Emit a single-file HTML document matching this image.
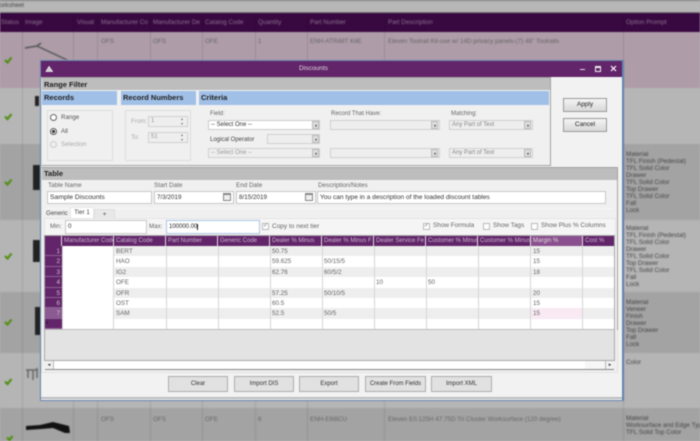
<!DOCTYPE html>
<html><head><meta charset="utf-8"><style>
html,body{margin:0;padding:0;width:700px;height:441px;overflow:hidden;background:#b4b4b4}
*{box-sizing:border-box}
body{font-family:"Liberation Sans",sans-serif;font-size:6.2px;color:#333;position:relative}
div,span{white-space:nowrap}
#bg{position:absolute;left:0;top:0;width:700px;height:441px;filter:blur(.7px);overflow:hidden}
#bg div{position:absolute}
#bg .t{color:#666;font-size:6.3px;line-height:7px}
#bg .h{color:#8d7190;font-size:6.3px;top:19px;line-height:7px}
#bg .o{color:#444;font-size:6.3px;line-height:7px;left:626px}
#fg{position:absolute;left:0;top:0;width:700px;height:441px;filter:blur(.4px)}
#fg div{position:absolute}
.sec{background:#bdbdbd;font-weight:bold;color:#222;font-size:7.5px;padding-left:2px;line-height:13px}
.blue{background:#a0c0e8;font-weight:bold;color:#222;font-size:7.5px;line-height:14px;padding-left:2px}
.inp{background:#fff;border:1px solid #c8c8c8;padding-left:2px;line-height:10px;color:#333;font-size:6.3px}
.dis{background:#eee;border:1px solid #d0d0d0;color:#999;padding-left:2px;line-height:8px;font-size:6px}
.arr{width:7px;height:8px;background:#ddd;border:1px solid #bbb}
.arr:after{content:"";position:absolute;left:1.5px;top:2.5px;border:1.5px solid transparent;border-top:2px solid #333}
.lb{color:#666;line-height:8px;font-size:6.2px}
.btn{background:#e1e1e1;border:1px solid #adadad;text-align:center;color:#333;line-height:15px;font-size:6px}
.btn2{background:linear-gradient(#f4f4f4,#d8d8d8);border:1px solid #999;text-align:center;color:#222;font-size:6.5px}
.gh{background:#62256a;color:#c8b4cc;top:236px;height:10px;line-height:10px;padding-left:2px;border-right:1px solid #ddd;overflow:hidden;font-size:6px}
.r{left:45px;width:569px;height:10.4px}
.rh{left:45px;width:17px;height:10.4px;background:#62256a;color:#cdbdd0;text-align:right;padding-right:2px;line-height:11px;border-bottom:1px solid #8d6094;font-size:6.3px}
.c{color:#666;line-height:11px;font-size:6.3px}
.vl{width:1px;top:246px;height:83px;background:#d6d6d6}
.chk{width:7px;height:7px;background:#fff;border:1px solid #bbb}
</style></head><body>
<div id="bg">
<div style="left:0;top:0;width:700px;height:1px;background:#777"></div>
<div style="left:0;top:1px;width:700px;height:11px;background:#b7b7b7"></div>
<div class="t" style="left:-6px;top:2px;color:#444">Worksheet</div>
<div style="left:0;top:12px;width:700px;height:1px;background:#7a7a7a"></div>
<div style="left:0;top:13px;width:700px;height:19px;background:#380840"></div>
<div style="left:0;top:32px;width:700px;height:56px;background:#ae9ca8"></div>
<div style="left:0;top:88px;width:700px;height:56px;background:#b6b6b6"></div>
<div style="left:0;top:144px;width:700px;height:76px;background:#a3a3a3"></div>
<div style="left:0;top:220px;width:700px;height:72px;background:#b5b5b5"></div>
<div style="left:0;top:292px;width:700px;height:61px;background:#a3a3a3"></div>
<div style="left:0;top:353px;width:700px;height:55px;background:#b5b5b5"></div>
<div style="left:0;top:408px;width:700px;height:33px;background:#a3a3a3"></div>
<div style="left:22px;top:13px;width:1px;height:428px;background:#0000001a"></div>
<div style="left:73px;top:13px;width:1px;height:428px;background:#0000001a"></div>
<div style="left:97px;top:13px;width:1px;height:428px;background:#0000001a"></div>
<div style="left:150px;top:13px;width:1px;height:428px;background:#0000001a"></div>
<div style="left:202px;top:13px;width:1px;height:428px;background:#0000001a"></div>
<div style="left:255px;top:13px;width:1px;height:428px;background:#0000001a"></div>
<div style="left:307px;top:13px;width:1px;height:428px;background:#0000001a"></div>
<div style="left:384px;top:13px;width:1px;height:428px;background:#0000001a"></div>
<div style="left:623px;top:13px;width:1px;height:428px;background:#0000001a"></div>
<div class="h" style="left:1px">Status</div><div class="h" style="left:25px">Image</div><div class="h" style="left:77px">Visual</div><div class="h" style="left:101px">Manufacturer Co</div><div class="h" style="left:153px">Manufacturer De</div><div class="h" style="left:205px">Catalog Code</div><div class="h" style="left:258px">Quantity</div><div class="h" style="left:310px">Part Number</div><div class="h" style="left:388px">Part Description</div><div class="h" style="left:626px">Option Prompt</div>
<div class="t" style="left:101px;top:38px">OFS</div><div class="t" style="left:153px;top:38px">OFS</div><div class="t" style="left:205px;top:38px">OFE</div><div class="t" style="left:258px;top:38px">1</div><div class="t" style="left:310px;top:38px">ENH-ATR48T KitE</div><div class="t" style="left:388px;top:38px">Eleven Toolrail Kit-use w/ 14D privacy panels-(7) 48" Toolrails</div>
<div class="t" style="left:101px;top:416px">OFS</div><div class="t" style="left:153px;top:416px">OFS</div><div class="t" style="left:205px;top:416px">OFE</div><div class="t" style="left:258px;top:416px">6</div><div class="t" style="left:310px;top:416px">ENH-E6i8CU</div><div class="t" style="left:388px;top:416px">Eleven E0.125H 47.75D Tri Cluster Worksurface (120 degree)</div>
<div class="o" style="top:151px">Material<br>TFL Finish (Pedestal)<br>TFL Solid Color<br>Drawer<br>TFL Solid Color<br>Top Drawer<br>TFL Solid Color<br>Fall<br>Lock</div>
<div class="o" style="top:225px">Material<br>TFL Finish (Pedestal)<br>TFL Solid Color<br>Drawer<br>TFL Solid Color<br>Top Drawer<br>TFL Solid Color<br>Fall<br>Lock</div>
<div class="o" style="top:299px">Material<br>Veneer<br>Finish<br>Drawer<br>Top Drawer<br>Fall<br>Lock</div>
<div class="o" style="top:359px">Color</div>
<div class="o" style="top:415px">Material<br>Worksurface and Edge Type<br>TFL Solid Top Color</div>
<svg style="position:absolute;left:0;top:0" width="700" height="441">
<g fill="none" stroke="#4f8f10" stroke-width="2.2"><path d="M5 60l2.500 2.500L11.500 57.500"/><path d="M5 116.500l2.500 2.500 4-5"/><path d="M5 182l2.500 2.500 4-5"/><path d="M5 256l2.500 2.500 4-5"/><path d="M5 322l2.500 2.500 4-5"/><path d="M5 381.500l2.500 2.500 4-5"/><path d="M7 437.500l2.500 2.500 3-4"/></g>
<path d="M25 48l12-2 4-3M37 46l30 14" stroke="#555" stroke-width="1.500" fill="none"/>
<path d="M35 96h4v10h-4zM33 165h7v25h-7zM33 240h7v22h-7zM35 307h6v28h-6z" fill="#222"/>
<path d="M26 426l14-1 13-3 16 4 1 7-5 0-12-5-12 1-15 1z" fill="#111"/>
<path d="M26 370h12M28 370v8M33 370v10M37 368v10" stroke="#666" stroke-width="1.500" fill="none"/>
</svg>
</div>
<div id="fg">
<div style="left:40px;top:60px;width:584px;height:341px;background:#f2f2f2;border:1px solid #6585b0;border-width:1px 2px 1px 1px"></div>
<div style="left:41px;top:397px;width:581px;height:2px;background:#bdbdbd"></div>
<div style="left:41px;top:61px;width:581px;height:16px;background:#62256a"></div>
<svg style="position:absolute;left:45px;top:65px" width="9" height="8"><path d="M1 6.500l3-5 3.500 5z" fill="#ccc" stroke="#eee" stroke-width=".8"/></svg>
<div style="left:299px;top:62px;color:#ddd;font-size:6.6px;line-height:14px">Discounts</div>
<div style="left:580px;top:69px;width:5px;height:1px;background:#ddd"></div>
<div style="left:595px;top:66px;width:6px;height:6px;border:1px solid #eee;border-top-width:2px"></div>
<svg style="position:absolute;left:610px;top:65px" width="8" height="8"><path d="M1 1l5 5M6 1l-5 5" stroke="#fff" stroke-width="1.200"/></svg>

<div style="left:41px;top:77px;width:510px;height:89px;border:1px solid #a3a3a3;border-left-color:#ddd;background:#f0f0f0"></div>
<div class="sec" style="left:42px;top:78px;width:508px;height:12px;line-height:13px">Range Filter</div>
<div class="blue" style="left:42px;top:91px;width:75px">Records</div>
<div class="blue" style="left:121px;top:91px;width:75px">Record Numbers</div>
<div class="blue" style="left:199px;top:91px;width:350px">Criteria</div>
<div style="left:47px;top:110px;width:66px;height:51px;border:1px solid #ddd"></div>
<div style="left:50px;top:114px;width:7px;height:7px;border:1px solid #666;border-radius:50%;background:#fff"></div>
<div style="left:61px;top:114px;line-height:8px;color:#555">Range</div>
<div style="left:50px;top:128px;width:7px;height:7px;border:1px solid #555;border-radius:50%;background:radial-gradient(#333 45%,#fff 50%)"></div>
<div style="left:61px;top:128px;line-height:8px;color:#555">All</div>
<div style="left:50px;top:141px;width:7px;height:7px;border:1px solid #ccc;border-radius:50%;background:#eee"></div>
<div style="left:61px;top:141px;line-height:8px;color:#aaa">Selection</div>
<div style="left:125px;top:110px;width:66px;height:51px;border:1px solid #ddd"></div>
<div style="left:131px;top:118px;line-height:8px;color:#aaa">From:</div>
<div style="left:131px;top:134px;line-height:8px;color:#aaa">To:</div>
<div class="dis" style="left:148px;top:116px;width:40px;height:11px;line-height:9px">1</div>
<div class="dis" style="left:148px;top:132px;width:40px;height:11px;line-height:9px">51</div>
<div style="left:181px;top:117px;color:#777;font-size:4px;line-height:4.500px;white-space:normal;width:5px">▴<br>▾</div>
<div style="left:181px;top:133px;color:#777;font-size:4px;line-height:4.500px;white-space:normal;width:5px">▴<br>▾</div>
<div class="lb" style="left:210px;top:110px;font-size:6px">Field:</div>
<div class="inp" style="left:208px;top:120px;width:112px;height:10px;line-height:8px;border-color:#ccc;font-size:6px">-- Select One --</div>
<div class="arr" style="left:312px;top:121px"></div>
<div class="lb" style="left:210px;top:136px;color:#444;font-size:6px">Logical Operator</div>
<div class="dis" style="left:267px;top:134px;width:53px;height:10px"></div><div class="arr" style="left:312px;top:135px"></div>
<div class="dis" style="left:208px;top:148px;width:112px;height:10px">-- Select One --</div><div class="arr" style="left:312px;top:149px"></div>
<div class="lb" style="left:331px;top:110px;font-size:6px">Record That Have:</div>
<div class="dis" style="left:330px;top:120px;width:110px;height:10px"></div><div class="arr" style="left:431px;top:121px"></div>
<div class="dis" style="left:330px;top:148px;width:110px;height:10px"></div><div class="arr" style="left:431px;top:149px"></div>
<div class="lb" style="left:451px;top:110px;font-size:6px">Matching:</div>
<div class="dis" style="left:449px;top:120px;width:84px;height:10px;color:#888">Any Part of Text</div><div class="arr" style="left:524px;top:121px"></div>
<div class="dis" style="left:449px;top:148px;width:84px;height:10px;color:#888">Any Part of Text</div><div class="arr" style="left:524px;top:149px"></div>
<div class="btn2" style="left:563px;top:98px;width:44px;height:14px;line-height:12px">Apply</div>
<div class="btn2" style="left:563px;top:118px;width:44px;height:14px;line-height:12px">Cancel</div>

<div style="left:41px;top:167px;width:577px;height:206px;border:1px solid #e2e2e2;border-top-color:#a3a3a3;background:#f0f0f0"></div>
<div style="left:617px;top:167px;width:1px;height:163px;background:#a3a3a3"></div>
<div class="sec" style="left:42px;top:168px;width:575px;height:12px;line-height:12px">Table</div>
<div class="lb" style="left:48px;top:182px;font-size:6.3px">Table Name</div>
<div class="lb" style="left:154px;top:182px;font-size:6.3px">Start Date</div>
<div class="lb" style="left:236px;top:182px;font-size:6.3px">End Date</div>
<div class="lb" style="left:318px;top:182px;font-size:6.3px">Description/Notes</div>
<div class="inp" style="left:47px;top:191px;width:105px;height:13px;line-height:11px;font-size:6.8px">Sample Discounts</div>
<div class="inp" style="left:154px;top:191px;width:80px;height:13px;line-height:11px">7/3/2019</div>
<div class="inp" style="left:236px;top:191px;width:80px;height:13px;line-height:11px">8/15/2019</div>
<div class="inp" style="left:317px;top:191px;width:289px;height:13px;line-height:11px;font-size:6.6px">You can type in a description of the loaded discount tables</div>
<div style="left:223px;top:193px;width:8px;height:8px;border:1px solid #888;border-top-width:2px;background:#eee"></div>
<div style="left:305px;top:193px;width:8px;height:8px;border:1px solid #888;border-top-width:2px;background:#eee"></div>
<div style="left:45px;top:208px;width:569px;height:1px;background:#f7f7f7"></div>
<div style="left:46px;top:209px;line-height:10px;color:#444">Generic</div>
<div style="left:70px;top:207px;width:24px;height:12px;background:#fff;text-align:center;line-height:10px;color:#444;border:1px solid #e8e8e8;border-bottom:0">Tier 1</div>
<div style="left:94px;top:209px;width:21px;height:10px;background:#e8e8e8;text-align:center;line-height:10px;color:#444;border:1px solid #ddd">+</div>
<div style="left:44px;top:218px;width:572px;height:18px;background:#f5f5f5;border:1px solid #e4e4e4"></div>
<div class="lb" style="left:50px;top:223px">Min:</div>
<div class="inp" style="left:65px;top:220px;width:82px;height:14px;line-height:12px">0</div>
<div class="lb" style="left:149px;top:223px">Max:</div>
<div class="inp" style="left:166px;top:220px;width:94px;height:14px;line-height:12px;border-color:#aac6e4;color:#222;font-size:6px">100000.00<span style="border-left:1px solid #222"></span></div>
<div class="chk" style="left:262px;top:223px;color:#777;font-size:6px;line-height:5px">✓</div>
<div class="lb" style="left:272px;top:223px;font-size:6.5px">Copy to next tier</div>
<div class="chk" style="left:423px;top:223px;color:#777;font-size:6px;line-height:5px">✓</div>
<div class="lb" style="left:433px;top:222px;font-size:6.4px">Show Formula</div>
<div class="chk" style="left:483px;top:223px"></div>
<div class="lb" style="left:493px;top:222px;font-size:6.4px">Show Tags</div>
<div class="chk" style="left:531px;top:223px"></div>
<div class="lb" style="left:541px;top:222px;font-size:6.4px">Show Plus % Columns</div>

<div style="left:44px;top:235px;width:571px;height:126px;background:#e3e3e3;border:1px solid #a8a8a8"></div>
<div class="gh" style="left:45px;width:17px"></div>
<div class="gh" style="left:62px;width:52px">Manufacturer Code</div>
<div class="gh" style="left:114px;width:52px">Catalog Code</div>
<div class="gh" style="left:166px;width:52px">Part Number</div>
<div class="gh" style="left:218px;width:52px">Generic Code</div>
<div class="gh" style="left:270px;width:52px">Dealer % Minus</div>
<div class="gh" style="left:322px;width:52px">Dealer % Minus F</div>
<div class="gh" style="left:374px;width:52px">Dealer Service Fe</div>
<div class="gh" style="left:426px;width:52px">Customer % Minus</div>
<div class="gh" style="left:478px;width:53px">Customer % Minus</div>
<div class="gh" style="left:531px;width:52px;background:#8a4f8e;color:#ddd">Margin %</div>
<div class="gh" style="left:583px;width:31px;border-right:0">Cost %</div>

<div class="r" style="top:246px;background:#eeeeee"></div>
<div class="r" style="top:256.400px;background:#fff"></div>
<div class="r" style="top:266.800px;background:#eeeeee"></div>
<div class="r" style="top:277.200px;background:#fff"></div>
<div class="r" style="top:287.600px;background:#eeeeee"></div>
<div class="r" style="top:298px;background:#fff"></div>
<div class="r" style="top:308.400px;background:#eeeeee"></div>
<div class="r" style="top:318.800px;background:#fff"></div>
<div style="left:62px;top:246px;width:52px;height:83px;background:#fff"></div>
<div style="left:531px;top:308.400px;width:52px;height:10.400px;background:#f8e9f3"></div>
<div class="vl" style="left:62px"></div><div class="vl" style="left:113px"></div><div class="vl" style="left:166px"></div><div class="vl" style="left:218px"></div><div class="vl" style="left:270px"></div><div class="vl" style="left:322px"></div><div class="vl" style="left:374px"></div><div class="vl" style="left:426px"></div><div class="vl" style="left:478px"></div><div class="vl" style="left:530px"></div><div class="vl" style="left:582px"></div>
<div style="left:45px;top:329px;width:569px;height:1px;background:#bbb"></div>
<div class="rh" style="top:246px">1</div><div class="rh" style="top:256.400px">2</div><div class="rh" style="top:266.800px">3</div><div class="rh" style="top:277.200px">4</div><div class="rh" style="top:287.600px">5</div><div class="rh" style="top:298px">6</div><div class="rh" style="top:308.400px;background:#8a5a90">7</div><div class="rh" style="top:318.800px;text-align:left;padding-left:1px;color:#111">*</div>
<div class="c" style="left:116px;top:246px">BERT</div><div class="c" style="left:116px;top:256.400px">HAO</div><div class="c" style="left:116px;top:266.800px">IG2</div><div class="c" style="left:116px;top:277.200px">OFE</div><div class="c" style="left:116px;top:287.600px">OFR</div><div class="c" style="left:116px;top:298px">OST</div><div class="c" style="left:116px;top:308.400px">SAM</div>
<div class="c" style="left:272px;top:246px">50.75</div><div class="c" style="left:272px;top:256.400px">59.625</div><div class="c" style="left:272px;top:266.800px">62.76</div><div class="c" style="left:272px;top:287.600px">57.25</div><div class="c" style="left:272px;top:298px">60.5</div><div class="c" style="left:272px;top:308.400px">52.5</div>
<div class="c" style="left:324px;top:256.400px">50/15/5</div><div class="c" style="left:324px;top:266.800px">60/5/2</div><div class="c" style="left:324px;top:287.600px">50/10/5</div><div class="c" style="left:324px;top:308.400px">50/5</div>
<div class="c" style="left:376px;top:277.200px">10</div><div class="c" style="left:428px;top:277.200px">50</div>
<div class="c" style="left:533px;top:246px">15</div><div class="c" style="left:533px;top:256.400px">15</div><div class="c" style="left:533px;top:266.800px">18</div><div class="c" style="left:533px;top:287.600px">20</div><div class="c" style="left:533px;top:298px">15</div><div class="c" style="left:533px;top:308.400px">15</div>
<div style="left:45px;top:360px;width:569px;height:10px;background:#fff;border-top:1px solid #a8a8a8;border-bottom:1px solid #888"></div>
<div style="left:45px;top:361px;width:9px;height:8px;background:#f0f0f0;border-right:1px solid #bbb;color:#333;font-size:5px;line-height:8px;text-align:center">◂</div>
<div style="left:585px;top:361px;width:20px;height:8px;background:#f6f6f6"></div>
<div style="left:605px;top:361px;width:9px;height:8px;background:#f0f0f0;border-left:1px solid #bbb;color:#333;font-size:5px;line-height:8px;text-align:center">▸</div>
<div class="btn" style="left:168px;top:376px;width:60px;height:16px">Clear</div>
<div class="btn" style="left:234px;top:376px;width:60px;height:16px">Import DIS</div>
<div class="btn" style="left:299px;top:376px;width:60px;height:16px">Export</div>
<div class="btn" style="left:365px;top:376px;width:61px;height:16px">Create From Fields</div>
<div class="btn" style="left:431px;top:376px;width:61px;height:16px">Import XML</div>
</div>
</body></html>
